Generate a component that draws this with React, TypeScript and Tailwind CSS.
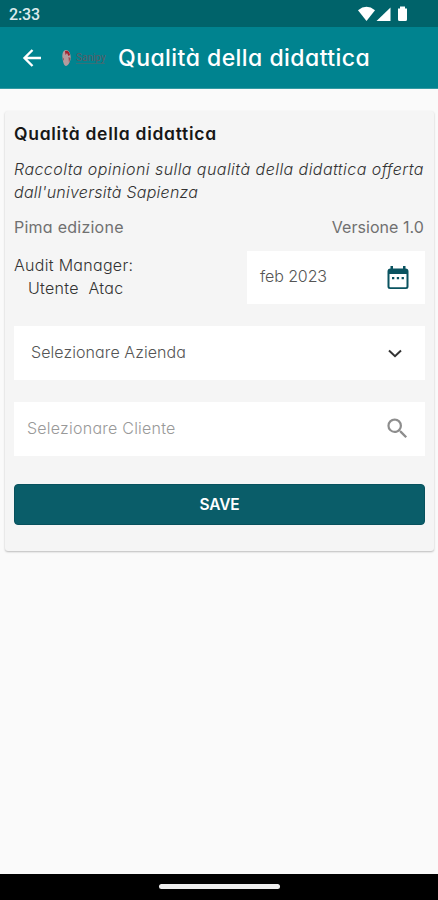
import { MdSearch } from "react-icons/md";

function StatusBar() {
  return (
    <div className="flex h-[27px] shrink-0 items-center justify-between bg-[#00636a] pl-[9px] pr-[29px] text-white">
      <span className="pt-[2px] font-[Roboto] text-[16px] leading-5 font-medium tracking-[-0.1px] text-[#dcebec]">2:33</span>
      <svg width="51" height="18" viewBox="0 0 51 18" fill="currentColor" className="shrink-0">
        <path d="M0 5.2Q8.500 -1.6 17 5.2L8.500 16Z" />
        <path d="M32.500 2.5V16H18.500Z" />
        <path d="M42 1.5h5v2h2v11q0 1.5-1.5 1.5h-6q-1.5 0-1.5-1.5v-11h2Z" />
      </svg>
    </div>
  );
}

function Logo() {
  return (
    <div className="ml-[18px] flex w-[48px] items-center gap-[5px]">
      <svg width="9" height="18" viewBox="0 0 9 18" className="shrink-0">
        <path d="M4 1C7 1 9 5 8.7 9S6 17 4 17 1 13 0.5 9 1 1 4 1Z" fill="#b39b9e" />
        <path d="M3 2Q7 1 8 6L6.5 7 5 4 3.5 6Z" fill="#a3202e" />
        <path d="M6.5 8 8.5 9 7 14Z" fill="#9d4750" />
        <path d="M0.5 8 2 10 1.5 12Z" fill="#9d4750" />
      </svg>
      <div className="flex flex-col items-start">
        <span className="font-[Roboto] text-[10px] leading-[11px] text-[#5b5c66]">Sanipy</span>
        <span className="h-px w-[29px] bg-[#34727a]" />
      </div>
    </div>
  );
}

function CalendarIcon() {
  return (
    <svg width="22" height="24" viewBox="0 0 22 24" className="shrink-0">
      <path fill="#0a5360" fillRule="evenodd" d="M3.5 0h2.5v2.5h10V0h2.500v2.500Q21.500 2.500 21.500 5.500v15Q21.500 23 19 23H3Q.5 23 .5 20.500v-15Q.5 2.500 3.500 2.500ZM2.500 8v12.500q0 .7.700.7h15.600q.7 0 .7-.7V8Z" />
      <path fill="#0a5360" d="M5 11h2.300v2.200H5zM9.800 11h2.300v2.200H9.800zM14.600 11h2.300v2.200h-2.300z" />
    </svg>
  );
}

export default function App() {
  return (
    <div className="flex h-[900px] w-full flex-col overflow-hidden bg-[#fafafa] font-[Inter,sans-serif] whitespace-nowrap [font-feature-settings:'cv11'_1]">
      <StatusBar />
      <header className="flex h-[62px] shrink-0 items-center border-b border-[#339aa3] bg-[#00838f] pl-[20px] text-white">
        <svg width="24" height="24" viewBox="0 0 24 24" fill="none" stroke="currentColor" strokeWidth="2.400" className="shrink-0">
          <path d="M21 12H5M12.500 4 4.500 12l8 8" />
        </svg>
        <Logo />
        <h1 className="ml-[8px] text-[23px] leading-8 font-medium tracking-[0.46px]">Qualità della didattica</h1>
      </header>
      <main className="flex-1 px-[5px] pt-[22px] pr-[4px]">
        <section className="flex h-[440px] flex-col rounded-[3px] bg-[#f5f5f5] px-[9px] pt-[11px] shadow-[0_1px_2px_rgba(0,0,0,0.25)]">
          <h2 className="text-[17.5px] leading-6 font-semibold tracking-[0.72px] text-[#171717]">Qualità della didattica</h2>
          <p className="mt-[12px] text-[16px] leading-[23px] font-light italic text-[#333]">
            <span className="tracking-[0.44px]">Raccolta opinioni sulla qualità della didattica offerta</span><br />
            <span className="tracking-[0.25px]">dall'università Sapienza</span>
          </p>
          <div className="mt-[11px] flex justify-between pr-[1px] text-[16px] leading-6 text-[#707070]">
            <span className="tracking-[0.25px]">Pima edizione</span>
            <span className="tracking-[0.05px]">Versione 1.0</span>
          </div>
          <div className="mt-[12px] flex justify-between">
            <div className="pt-[3px] text-[16px] leading-[23px] font-light tracking-[0.3px] text-[#333]">
              <p>Audit Manager:</p>
              <p className="pl-[14px] whitespace-pre">Utente  Atac</p>
            </div>
            <div className="flex h-[53px] w-[178px] items-center justify-between bg-white pr-[16px] pl-[13px] text-[16px] font-light text-[#555]">
              <span className="pb-[3px] tracking-[-0.1px]">feb 2023</span>
              <CalendarIcon />
            </div>
          </div>
          <div className="mt-[22px] flex h-[54px] items-center justify-between bg-white pr-[23px] pl-[17px] text-[16px] font-light text-[#555]">
            <span className="pb-[2px] tracking-[0.08px]">Selezionare Azienda</span>
            <svg width="14" height="9" viewBox="0 0 14 9" fill="none" stroke="#333" strokeWidth="2"><path d="M1 1.500 7 7.200 13 1.500" /></svg>
          </div>
          <div className="mt-[22px] flex h-[54px] items-center justify-between bg-white pr-[14px] pl-[13px] text-[16px] font-light text-[#999]">
            <span className="pb-[3px] tracking-[0.24px]">Selezionare Cliente</span>
            <MdSearch size={27} color="#8d8d8d" className="-mt-[2px]" />
          </div>
          <button className="mt-[28px] h-[41px] shrink-0 rounded-[4px] border border-[#07515d] bg-[#0a5d69] text-[15.5px] font-semibold tracking-[-0.2px] text-white">SAVE</button>
        </section>
      </main>
      <footer className="flex h-[26px] shrink-0 justify-center bg-black pt-[10px]">
        <div className="h-[5px] w-[121px] rounded-full bg-[#eee]" />
      </footer>
    </div>
  );
}
